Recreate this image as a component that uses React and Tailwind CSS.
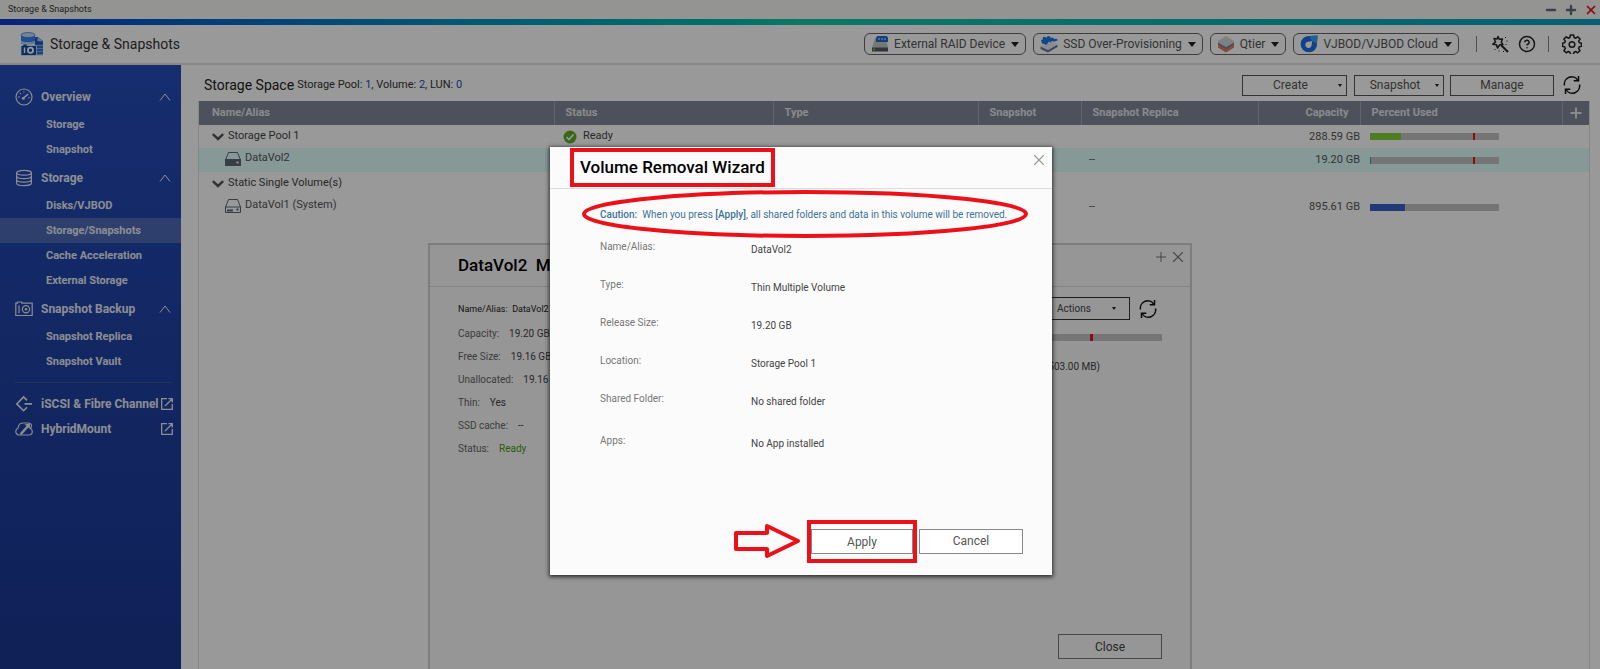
import React from 'react';
import { CircleHelp, Minus, Plus, X } from 'lucide-react';
import { clsx } from 'clsx';

const menu = [
  {
    name: 'Overview',
    icon: 'gauge',
    items: ['Storage', 'Snapshot'],
  },
  {
    name: 'Storage',
    icon: 'disks',
    items: ['Disks/VJBOD', 'Storage/Snapshots', 'Cache Acceleration', 'External Storage'],
  },
  {
    name: 'Snapshot Backup',
    icon: 'camera',
    items: ['Snapshot Replica', 'Snapshot Vault'],
  },
];

const links = [
  { name: 'iSCSI & Fibre Channel', icon: 'iscsi' },
  { name: 'HybridMount', icon: 'cloud' },
];

const tools = [
  { name: 'External RAID Device', icon: 'raid' },
  { name: 'SSD Over-Provisioning', icon: 'ssd' },
  { name: 'Qtier', icon: 'qtier' },
  { name: 'VJBOD/VJBOD Cloud', icon: 'vjbod' },
];

const columns = [
  { name: 'Name/Alias', width: 'w-[355px]', cell: 'pl-[13px] text-left' },
  { name: 'Status', width: 'w-[219px]', cell: 'pl-[11px] text-left' },
  { name: 'Type', width: 'w-[205px]', cell: 'pl-[11px] text-left' },
  { name: 'Snapshot', width: 'w-[103px]', cell: 'pl-[11px] text-left' },
  { name: 'Snapshot Replica', width: 'w-[177px]', cell: 'pl-[11px] text-left' },
  { name: 'Capacity', width: 'w-[102px]', cell: 'pr-[11px] text-right' },
  { name: 'Percent Used', width: '', cell: 'pl-[11px] text-left' },
];

const rows = [
  { name: 'Storage Pool 1', group: true, ready: true, capacity: '288.59 GB', used: 24, color: 'bg-[#84d038]', alert: true },
  { name: 'DataVol2', full: true, selected: true, replica: '--', capacity: '19.20 GB', used: 1, color: 'bg-[#20a8a0]', alert: true },
  { name: 'Static Single Volume(s)', group: true },
  { name: 'DataVol1 (System)', replica: '--', capacity: '895.61 GB', used: 27, color: 'bg-[#3a5fc8]' },
];

const volumeInfo = [
  { label: 'Capacity:', value: '19.20 GB' },
  { label: 'Free Size:', value: '19.16 GB' },
  { label: 'Unallocated:', value: '19.16 GB' },
  { label: 'Thin:', value: 'Yes' },
  { label: 'SSD cache:', value: '--' },
  { label: 'Status:', value: 'Ready', color: 'text-[#4a9a10]' },
];

const removalInfo = [
  { label: 'Name/Alias:', value: 'DataVol2' },
  { label: 'Type:', value: 'Thin Multiple Volume' },
  { label: 'Release Size:', value: '19.20 GB' },
  { label: 'Location:', value: 'Storage Pool 1' },
  { label: 'Shared Folder:', value: 'No shared folder' },
  { label: 'Apps:', value: 'No App installed' },
];

const MenuIcon = ({ name }) => (
  <svg className="h-[18px] w-[18px] shrink-0" viewBox="0 0 18 18" fill="none" stroke="currentColor" strokeWidth="1.2">
    {name === 'gauge' && (
      <>
        <circle cx="9" cy="9" r="8" />
        <circle cx="8.4" cy="10.2" r="1.5" fill="currentColor" stroke="none" />
        <path d="M9 9.6 13.2 6" strokeWidth="1.6" />
        <path d="M3.4 9h1.2M5 5.2l.9.9M8.8 3.4v1.2M13.4 9.6h1.2" strokeWidth="1.4" />
      </>
    )}
    {name === 'disks' && (
      <>
        <ellipse cx="9" cy="3.8" rx="7.4" ry="2.4" />
        <path d="M1.6 3.8v10.4c0 1.3 3.3 2.4 7.4 2.4s7.4-1.1 7.4-2.4V3.8" />
        <path d="M1.6 7.3c0 1.3 3.3 2.4 7.4 2.4s7.4-1.1 7.4-2.4M1.6 10.8c0 1.3 3.3 2.4 7.4 2.4s7.4-1.1 7.4-2.4" />
      </>
    )}
    {name === 'camera' && (
      <>
        <path d="M.8 15.5V3.2h1.6V2h4.4v1.2h10.4v12.3z" />
        <path d="M4 5.5v7.8" />
        <circle cx="11" cy="9.3" r="3.6" />
        <circle cx="11" cy="9.3" r="1.3" fill="currentColor" stroke="none" />
      </>
    )}
    {name === 'iscsi' && (
      <path d="M12 5.4 8.6 2 1.8 8.9l6.8 6.8 3.4-3.4M9.5 8.9H17" strokeWidth="1.6" />
    )}
    {name === 'cloud' && (
      <>
        <path d="M4.5 15C2.3 15 .8 13.5.8 11.4c0-1.7.9-2.9 2.3-3.4C3.3 5 5.3 3 8.3 3h4.9c2 0 3.3 1.2 3.3 3 0 1.1-.5 1.9-1 2.5 1.2.6 1.8 1.7 1.8 3 0 2.1-1.5 3.5-3.6 3.5z" />
        <path d="M15 3.5v5.2l-1.7-1.2L6.5 15l-1.8-1.4 6.8-7.6-2-1.5z" fill="currentColor" stroke="none" />
      </>
    )}
  </svg>
);

const ToolIcon = ({ name }) => (
  <svg className="h-[18px] w-[18px] shrink-0" viewBox="0 0 18 18">
    {name === 'raid' && (
      <>
        <path d="M4 3h11l2 10H1z" fill="#c4c6c8" />
        <path d="M1 12.5h16v4H1z" fill="#55585c" />
        <path d="M5 2.5 6.5 1h9L17 2.5V7H5z" fill="#1f6ad0" />
        <path d="M7 4h2M10 4h2M13 4h2" stroke="#a4c8f8" strokeWidth="1.5" />
        <path d="M2 14.5h2" stroke="#6fd02c" strokeWidth="1.5" />
      </>
    )}
    {name === 'ssd' && (
      <>
        <path d="m.5 11.5 7.500 3.500 9.500-5.500V12L8 17.500.5 14z" fill="#6c7a90" />
        <path d="m.5 11 9-5 8 3-9.500 5.500z" fill="#e3e8ee" />
        <path d="m1 5 2-.8-.4-2 2.600-.4 1 1.200 1.600-2 2.400.6.3 1.400 2.500-.6 1 1.500 3-.2.5 1.800-2.200.8-1.800.4-1.500-.9-1 1.700-2.200-.9-1 1.600-1.800 1.800-1.500-1L2 8.500z" fill="#1f76e8" />
      </>
    )}
    {name === 'qtier' && (
      <>
        <path d="m1 10 8 4.500 8-4.500v2.500l-8 5-8-5z" fill="#f0705a" />
        <path d="m1 7 8 4.500L17 7v3l-8 4.800L1 10z" fill="#7d858a" />
        <path d="m9 1 8 5v1.500L9 12 1 7.500V6z" fill="#d4d6d8" />
      </>
    )}
    {name === 'vjbod' && (
      <>
        <path d="M17.500.5 17 8.500A8.200 8.200 0 1 1 9.500 1z" fill="#1a6fe8" />
        <path d="M17.500.5 17 8.500 12 6 9.500 1z" fill="#38a4f4" />
        <circle cx="8.500" cy="9.800" r="3.100" fill="#fff" />
        <path d="M8.500 6.700 12 6l-.4 3.800z" fill="#fff" />
      </>
    )}
  </svg>
);

const RefreshIcon = () => (
  <svg className="h-[18px] w-[18px] shrink-0" viewBox="0 0 18 18" fill="none" stroke="#111" strokeWidth="1.5">
    <path d="M1.500 9.500A7.300 7.300 0 0 1 15 4.500M16.500 8.500A7.300 7.300 0 0 1 3 13.500" />
    <path d="M15.500 0v4.800h-4.800M2.500 18v-4.800h4.800" />
  </svg>
);

const DriveIcon = ({ full }) => (
  <svg className="h-[14px] w-[16px] shrink-0" viewBox="0 0 16 14" fill="none" stroke="#5d6474" strokeWidth="1">
    <path d="M.5 8 3.500.500h9L15.500 8v5.500H.500z" />
    {full ? (
      <path d="M.5 7.500h15v6H.500z" fill="#5d6474" />
    ) : (
      <>
        <path d="M.5 8h15" />
        <path d="M2 11.500h6" strokeWidth="2" />
      </>
    )}
    <path d="M11.500 9.500h2v2h-2z" fill={full ? '#fff' : '#5d6474'} stroke="none" />
  </svg>
);

const AppLogo = () => (
  <svg className="h-6 w-6 shrink-0" viewBox="0 0 24 24">
    <path d="M15 5h3l5 4v14h-8z" fill="#2458c0" />
    <path d="m17.500 4.500 5.500 5-5.500-.5z" fill="#a8c8f4" />
    <path d="M17 13.500h6M17 16.500h6M17 19.500h6M17 22.500h6" stroke="#6cb0f8" strokeWidth="1.5" />
    <path d="M1 3v9h14V3z" fill="#2f86ee" />
    <ellipse cx="8" cy="3" rx="7" ry="2.5" fill="#c4dcf8" stroke="#3a84e0" strokeWidth=".8" />
    <path d="M1 8.500c2 2 12 2 14 0v3c-2 1.500-12 1.500-14 0z" fill="#a8d0fa" />
    <path d="M1 13.500h2V12h4v1.500h9.500v10H1z" fill="#0e4ea0" stroke="#e8f0fa" strokeWidth=".8" />
    <path d="M4.500 15.500v5.500" stroke="#fff" strokeWidth="1.4" />
    <circle cx="10.5" cy="18.3" r="2.6" fill="none" stroke="#fff" strokeWidth="1.8" />
  </svg>
);

const WandIcon = () => (
  <svg className="h-[18px] w-[18px]" viewBox="0 0 18 18" fill="none" stroke="#222" strokeWidth="1.5">
    <path d="m7 1.500 1.200 2.800 3.300-.3-1.300 3 1.700 2.500-3.200.3L6.500 13l-1-3.300-3.700-.5L4.500 7 3 3.500l3 .5z" strokeLinejoin="round" />
    <path d="m10 10 7 7" strokeWidth="2" />
    <path d="M14 2.500h1M15.500 6h1M14.500 9.500h1M3.500 14.500h1M7.500 16h1M12 16.500h1" strokeWidth="1.2" />
  </svg>
);

const GearIcon = () => (
  <svg className="h-5 w-5" viewBox="0 0 20 20" fill="none" stroke="#222" strokeWidth="1.5" strokeLinejoin="round">
    <path d="M8.400 1h3.200l.5 2.500 1.600.7 2.100-1.400 2.300 2.300-1.400 2.100.7 1.600 2.100.4v3.100l-2.200.5-.7 1.700 1.400 2.100-2.300 2.200-2.100-1.300-1.600.7-.5 2.300H8.400l-.5-2.300-1.600-.7-2.100 1.300L1.900 16.600l1.400-2.100-.7-1.700-2.100-.5V9.200l2.100-.4.7-1.600L1.900 5.100l2.300-2.300 2.100 1.400 1.600-.7z" />
    <circle cx="10" cy="10.5" r="2.8" />
  </svg>
);

const ExternalIcon = () => (
  <svg className="h-3 w-3 shrink-0" viewBox="0 0 12 12" fill="none" stroke="currentColor" strokeWidth="1.3">
    <path d="M6 .7H.7v10.600h10.600V6M7.500.7h3.800v3.800M11.300.7 4 8" />
  </svg>
);

const Caret = ({ small }) => (
  <span
    className={clsx(
      'h-0 w-0 border-x-transparent border-t-[#222]',
      small ? 'border-x-2 border-t-3' : 'border-x-4 border-t-5'
    )}
  />
);

const UsageBar = ({ used, color, alert }) => (
  <div className="relative h-[7px] w-[129px] bg-[#c4c4c4]">
    <div className={clsx('h-full', color)} style={{ width: `${used}%` }} />
    {alert && <span className="absolute inset-y-0 left-[80%] w-0.5 bg-[#f01020]" />}
  </div>
);

const Sidebar = () => (
  <nav className="w-[181px] shrink-0 bg-linear-to-b from-[#254bb8] to-[#1a3790] pt-4 text-[#e8ecf4]">
    {menu.map((group) => (
      <div key={group.name}>
        <button className="flex h-[31px] w-full items-center pr-[10px] pl-[15px] text-xs font-bold">
          <MenuIcon name={group.icon} />
          <span className="ml-2 flex-1 text-left">{group.name}</span>
          <svg className="h-2 w-3" viewBox="0 0 12 8" fill="none" stroke="currentColor">
            <path d="m1 7.500 5-6.500 5 6.500" />
          </svg>
        </button>
        {group.items.map((item) => (
          <a
            key={item}
            href="#"
            className={clsx(
              'flex h-[25px] items-center pt-[2px] pl-[46px] text-[11px] font-bold',
              item === 'Storage/Snapshots' && 'bg-[#4e69b8]'
            )}
          >
            {item}
          </a>
        ))}
      </div>
    ))}
    <hr className="my-2 mr-2 ml-[14px] border-[#3a5590]" />
    {links.map((link) => (
      <a key={link.name} href="#" className="flex h-[25px] items-center pr-2 pl-[15px] text-xs font-bold whitespace-nowrap">
        <MenuIcon name={link.icon} />
        <span className="ml-2 flex-1">{link.name}</span>
        <ExternalIcon />
      </a>
    ))}
  </nav>
);

const Header = () => (
  <header className="flex h-10 shrink-0 items-center border-b-2 border-[#e2e2e2] pr-[18px] pl-5">
    <AppLogo />
    <h1 className="ml-[6px] text-sm text-[#333]">Storage &amp; Snapshots</h1>
    <div className="ml-auto flex gap-[7px]">
      {tools.map((tool) => (
        <button
          key={tool.name}
          className="flex h-[22px] items-center rounded-md border border-[#666] px-[6px] text-xs text-[#555]"
        >
          <ToolIcon name={tool.icon} />
          <span className="mr-[6px] ml-[5px]">{tool.name}</span>
          <Caret />
        </button>
      ))}
    </div>
    <span className="ml-[17px] h-4 w-px bg-[#888]" />
    <button aria-label="Wizard" className="ml-[14px]"><WandIcon /></button>
    <button aria-label="Help" className="ml-[9px]"><CircleHelp size={18} color="#222" /></button>
    <span className="ml-3 h-4 w-px bg-[#888]" />
    <button aria-label="Settings" className="ml-[13px]"><GearIcon /></button>
  </header>
);

const VolumeTable = () => (
  <div className="flex-1 border-x border-[#e0e0e0]">
    <table className="w-full table-fixed text-[11px] text-[#555]">
      <thead>
        <tr className="h-6 bg-[#808899] text-[#e4e6ea]">
          {columns.map((column) => (
            <th key={column.name} className={clsx('border-r border-[#a0a6b2] font-bold', column.width, column.cell)}>
              {column.name}
            </th>
          ))}
          <th className="w-[27px]">
            <button aria-label="Add column" className="flex w-full justify-center">
              <Plus size={16} strokeWidth={3} />
            </button>
          </th>
        </tr>
      </thead>
      <tbody>
        {rows.map((row) => (
          <tr key={row.name} className={clsx(row.group ? 'h-[23px]' : 'h-6', row.selected && 'bg-[#dffffa]')}>
            <td>
              {row.group ? (
                <div className="flex items-center gap-1 pl-[13px] text-[#444]">
                  <svg className="h-2 w-3 shrink-0" viewBox="0 0 12 8" fill="none" stroke="#555" strokeWidth="2.4">
                    <path d="m.8 1.200 5.200 4.800 5.200-4.800" />
                  </svg>
                  {row.name}
                </div>
              ) : (
                <div className="flex items-center gap-1 pb-[3px] pl-[26px]">
                  <DriveIcon full={row.full} />
                  {row.name}
                </div>
              )}
            </td>
            <td>
              {row.ready && (
                <div className="flex items-center gap-[6px] pl-[9px] text-[#444]">
                  <svg className="h-[14px] w-[14px]" viewBox="0 0 14 14">
                    <circle cx="7" cy="7" r="6.5" fill="#5fae28" />
                    <path d="m3.500 7 2.500 2.500L10.500 4.500" fill="none" stroke="#fff" strokeWidth="1.6" />
                  </svg>
                  Ready
                </div>
              )}
            </td>
            <td />
            <td />
            <td className="pl-[8px]">{row.replica}</td>
            <td className="pt-px text-right">{row.capacity}</td>
            <td className="pl-[10px]">
              {row.capacity && <UsageBar used={row.used} color={row.color} alert={row.alert} />}
            </td>
            <td />
          </tr>
        ))}
      </tbody>
    </table>
  </div>
);

const ManageWindow = () => (
  <section className="absolute top-[243px] left-[428px] h-[480px] w-[764px] border-2 border-[#d0d0d0] bg-[#fafafa] text-[10px] text-[#444]">
    <div className="flex h-[42px] items-center justify-between border-b border-[#dcdcdc] pr-[3px] pl-7">
      <h2 className="text-[17px] font-medium whitespace-pre text-black">DataVol2  Management</h2>
      <div className="flex items-center self-start pt-[3px] text-[#777]">
        <button aria-label="Maximize"><Plus size={16} strokeWidth={1.5} /></button>
        <button aria-label="Close window"><X size={18} strokeWidth={1.5} /></button>
      </div>
    </div>
    <div className="flex justify-between pr-7 pl-7">
      <div className="pt-[14px]">
        <p className="mb-[5px] text-[9px] leading-4 text-[#222]">Name/Alias: &nbsp;DataVol2</p>
        {volumeInfo.map((info) => (
          <p key={info.label} className="flex h-[23px] items-center gap-[10px]">
            <span className="text-[#666]">{info.label}</span>
            <span className={info.color}>{info.value}</span>
          </p>
        ))}
      </div>
      <div className="w-[260px] pt-[10px]">
        <div className="flex items-center justify-end gap-[9px] pr-[5px]">
          <button className="flex h-[23px] w-[104px] items-center justify-between border border-[#333] pr-[13px] pl-[30px]">
            Actions
            <Caret small />
          </button>
          <RefreshIcon />
        </div>
        <div className="relative mt-[14px] h-[7px] bg-[#c4c4c4]">
          <span className="absolute inset-y-0 right-[69px] w-[3px] bg-[#f01020]" />
        </div>
        <p className="mt-[18px] pr-[62px] text-right leading-4">(503.00 MB)</p>
      </div>
    </div>
    <button className="absolute right-7 bottom-[62px] h-[25px] w-[104px] border border-[#777] text-xs">Close</button>
  </section>
);

const RemovalWizard = () => (
  <div role="dialog" aria-labelledby="wizard-title" className="relative h-[428px] w-[502px] bg-[#fbfbfb] shadow-[0_1px_4px_1px_rgba(0,0,0,0.7)]">
    <div className="flex h-[42px] items-center justify-between border-b border-[#ddd] pl-5">
      <h2 id="wizard-title" className="border-4 border-[#ed1018] px-[6px] py-[3px] text-[17px] leading-[25px] font-medium text-black">
        Volume Removal Wizard
      </h2>
      <button aria-label="Close" className="mr-1 self-start pt-1">
        <X size={18} strokeWidth={1.5} color="#999" />
      </button>
    </div>
    <div className="relative pt-[18px] pl-[50px] text-[10px] leading-4 whitespace-nowrap text-[#3d7299]">
      <span className="font-medium">Caution:</span>&nbsp; When you press <span className="font-medium">[Apply]</span>, all shared folders and data in this volume will be removed.
      <svg className="absolute top-px left-8 h-12 w-[446px]" viewBox="0 0 446 48" fill="none" stroke="#ed1018" strokeWidth="4">
        <ellipse cx="223" cy="24" rx="221" ry="22" />
      </svg>
    </div>
    <dl className="mt-[14px] pl-[50px] text-[10px] leading-5">
      {removalInfo.map((info) => (
        <div key={info.label} className="flex h-[38px] last:mt-1">
          <dt className="w-[151px] text-[#777]">{info.label}</dt>
          <dd className="pt-[3px] text-[#444]">{info.value}</dd>
        </div>
      ))}
    </dl>
    <div className="absolute right-[29px] bottom-3 flex items-center gap-[2px]">
      <svg className="mr-[2px] h-[36px] w-[70px]" viewBox="0 0 70 36" fill="none" stroke="#ed1018" strokeWidth="4" strokeLinejoin="round">
        <path d="M3 10h31V3l31 15-31 15v-7H3z" />
      </svg>
      <div className="border-4 border-[#ed1018] py-[5px]">
        <button className="h-[25px] w-[102px] border border-[#888] bg-white text-xs text-[#555]">Apply</button>
      </div>
      <button className="h-[25px] w-[104px] border border-[#888] bg-white text-xs text-[#555]">Cancel</button>
    </div>
  </div>
);

export default function App() {
  return (
    <div className="relative flex h-screen flex-col overflow-hidden bg-white font-[Roboto,sans-serif]">
      <div className="flex h-[19px] shrink-0 items-center justify-between bg-[#f7f7f5] pr-[2px] pl-2 text-[9px] text-[#333]">
        Storage &amp; Snapshots
        <div className="flex gap-[6px]">
          <button aria-label="Minimize window"><Minus size={14} strokeWidth={4} color="#666b78" /></button>
          <button aria-label="Maximize window"><Plus size={14} strokeWidth={4} color="#666b78" /></button>
          <button aria-label="Close app"><X size={14} strokeWidth={3} color="#e81020" /></button>
        </div>
      </div>
      <div className="h-[6px] shrink-0 bg-linear-to-r from-[#1438d0] via-[#14c8a8] via-50% to-[#0ca0c0]" />
      <Header />
      <div className="flex min-h-0 flex-1">
        <Sidebar />
        <main className="flex flex-1 flex-col pr-[10px] pl-[17px]">
          <div className="flex h-9 items-center pt-1 pr-[9px] pl-[6px] text-xs text-[#555]">
            <h2 className="text-sm text-[#222]">Storage Space</h2>
            <p className="ml-[3px] text-[11px] text-[#333]">
              Storage Pool: <a href="#" className="text-[#2450b0]">1</a>, Volume: <a href="#" className="text-[#2450b0]">2</a>, LUN:{' '}
              <a href="#" className="text-[#2450b0]">0</a>
            </p>
            <button className="ml-auto flex h-[21px] w-[105px] items-center border border-[#555] pr-1">
              <span className="flex-1">Create</span>
              <Caret small />
            </button>
            <button className="ml-[7px] flex h-[21px] w-[90px] items-center border border-[#555] pr-1">
              <span className="flex-1">Snapshot</span>
              <Caret small />
            </button>
            <button className="mr-[9px] ml-[6px] h-[21px] w-[104px] border border-[#555]">Manage</button>
            <button aria-label="Refresh"><RefreshIcon /></button>
          </div>
          <VolumeTable />
        </main>
      </div>
      <ManageWindow />
      <div className="absolute inset-0 flex items-start justify-center bg-black/40 pt-[147px] pl-[2px]">
        <RemovalWizard />
      </div>
    </div>
  );
}
